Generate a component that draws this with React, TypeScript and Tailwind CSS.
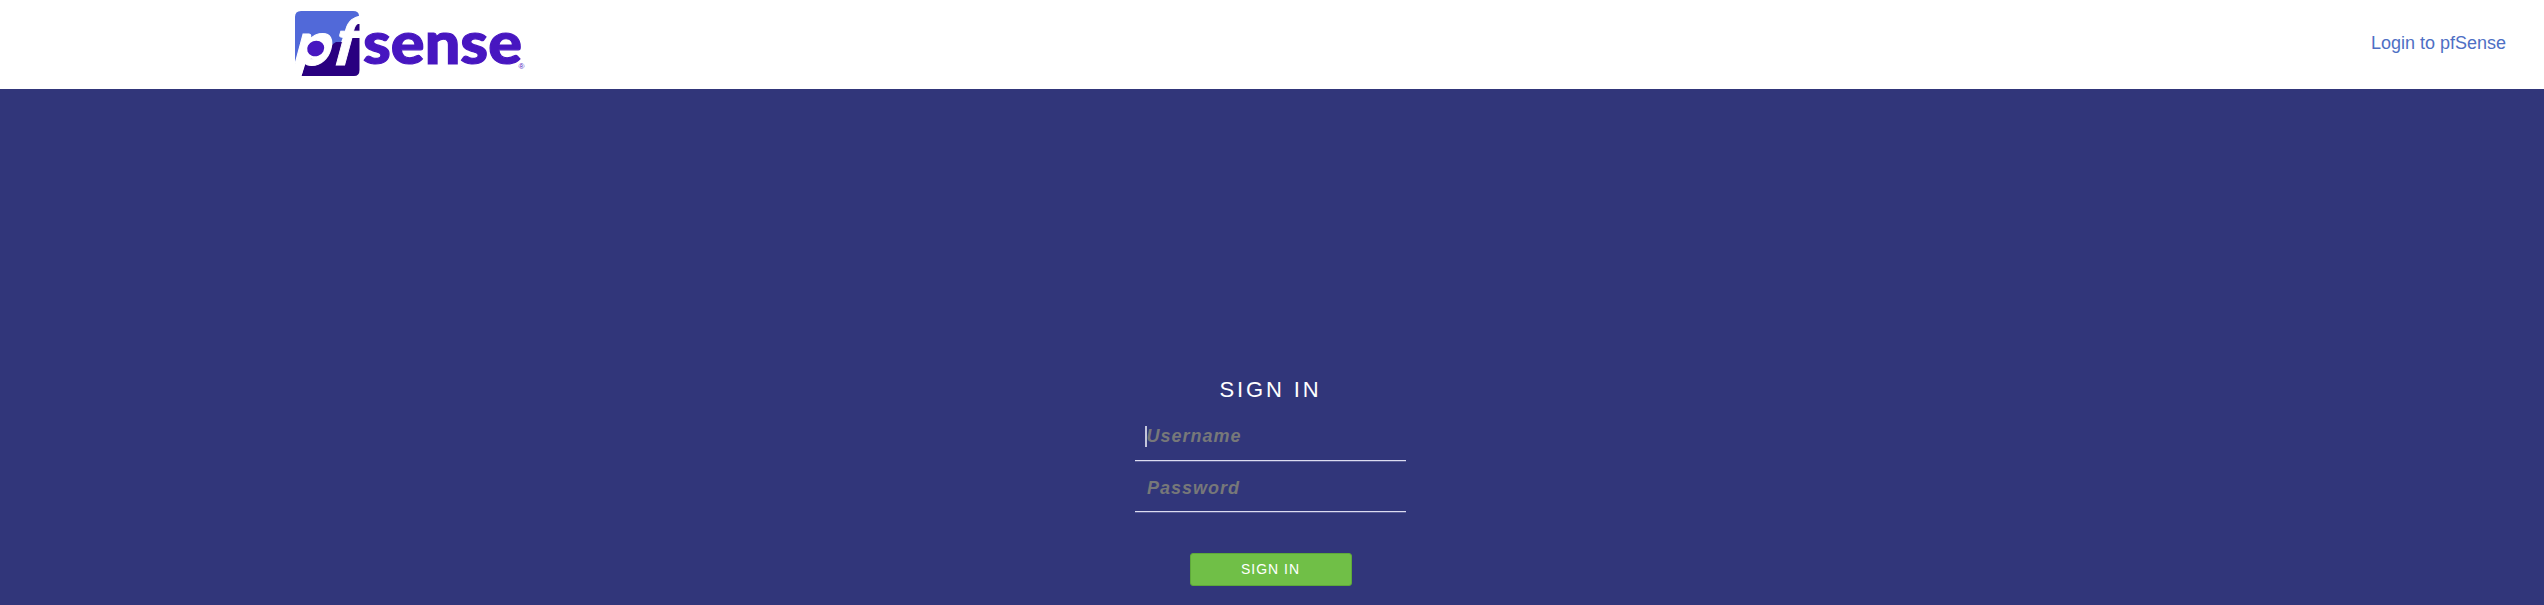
function Logo() {
  return (
    <svg width="260" height="89" viewBox="280 0 260 89" className="block" role="img" aria-label="pfsense">
      <path d="M301 11H353Q359 11 359 16L348 24L340 45L304 40L295 67V17Q295 11 301 11Z" fill="#5169d9" />
      <path d="M301.500 76H354Q359.500 76 359.500 70V24H353L346 42L336 42L306 62Z" fill="#290080" />
      <text transform="matrix(1.1 0 -0.27 1 291 64.500)" fontSize="60" strokeWidth="1" className="fill-white stroke-white font-['Lato'] font-black">p</text>
      <ellipse cx="316" cy="48.500" rx="12" ry="11" fill="white" />
      <ellipse cx="315.700" cy="48.500" rx="8.700" ry="7.700" transform="rotate(-20 315.700 48.500)" fill="#4716c0" />
      <text transform="matrix(0.92 0 -0.27 1 330.500 64.500)" fontSize="66" strokeWidth="1" className="fill-white stroke-white font-['Lato'] font-black">f</text>
      <text x="363" y="64" fontSize="59" strokeWidth="1.200" textLength="159" lengthAdjust="spacingAndGlyphs" className="fill-[#4716c0] stroke-[#4716c0] font-['Lato'] font-black">sense</text>
      <text x="518.500" y="68.500" fontSize="8" className="fill-[#4716c0] font-['Liberation_Sans']">®</text>
    </svg>
  );
}

export default function App() {
  return (
    <div className="flex h-[605px] flex-col overflow-hidden bg-[#31367a] font-['Liberation_Sans',sans-serif]">
      <header className="flex h-[89px] shrink-0 items-start justify-between bg-white pl-[280px] pr-[38px]">
        <Logo />
        <span className="pt-[29px] text-[18px] leading-[28px] text-[#4e6fc4]">Login to pfSense</span>
      </header>
      <main className="flex flex-col pl-[1135px] pt-[285px]">
        <form className="flex w-[271px] flex-col items-center">
          <h1 className="h-[45px] pt-1 text-[22px] leading-[24px] tracking-[2.900px] text-white">SIGN IN</h1>
          <label className="flex h-[42px] w-full border-b border-b-[#dcdcf0] pl-[10px] pt-[7px] shadow-[0_1px_0_#5a5e98]">
            <span className="h-[21px] w-[1.500px] bg-[#c4c6dc]" />
            <span className="text-[18px] leading-[20px] font-bold italic tracking-[1px] text-[#777879]">Username</span>
          </label>
          <label className="flex h-[51px] w-full border-b border-b-[#dcdcf0] pl-[12px] pt-[17px] shadow-[0_1px_0_#5a5e98]">
            <span className="text-[18px] leading-[20px] font-bold italic tracking-[1px] text-[#777879]">Password</span>
          </label>
          <button type="button" className="mt-[41px] h-[33px] w-[162px] rounded-[3px] border border-[#5ea93a] bg-[#70bf47] pb-px text-[14px] leading-none tracking-[1px] text-white">SIGN IN</button>
        </form>
      </main>
    </div>
  );
}
